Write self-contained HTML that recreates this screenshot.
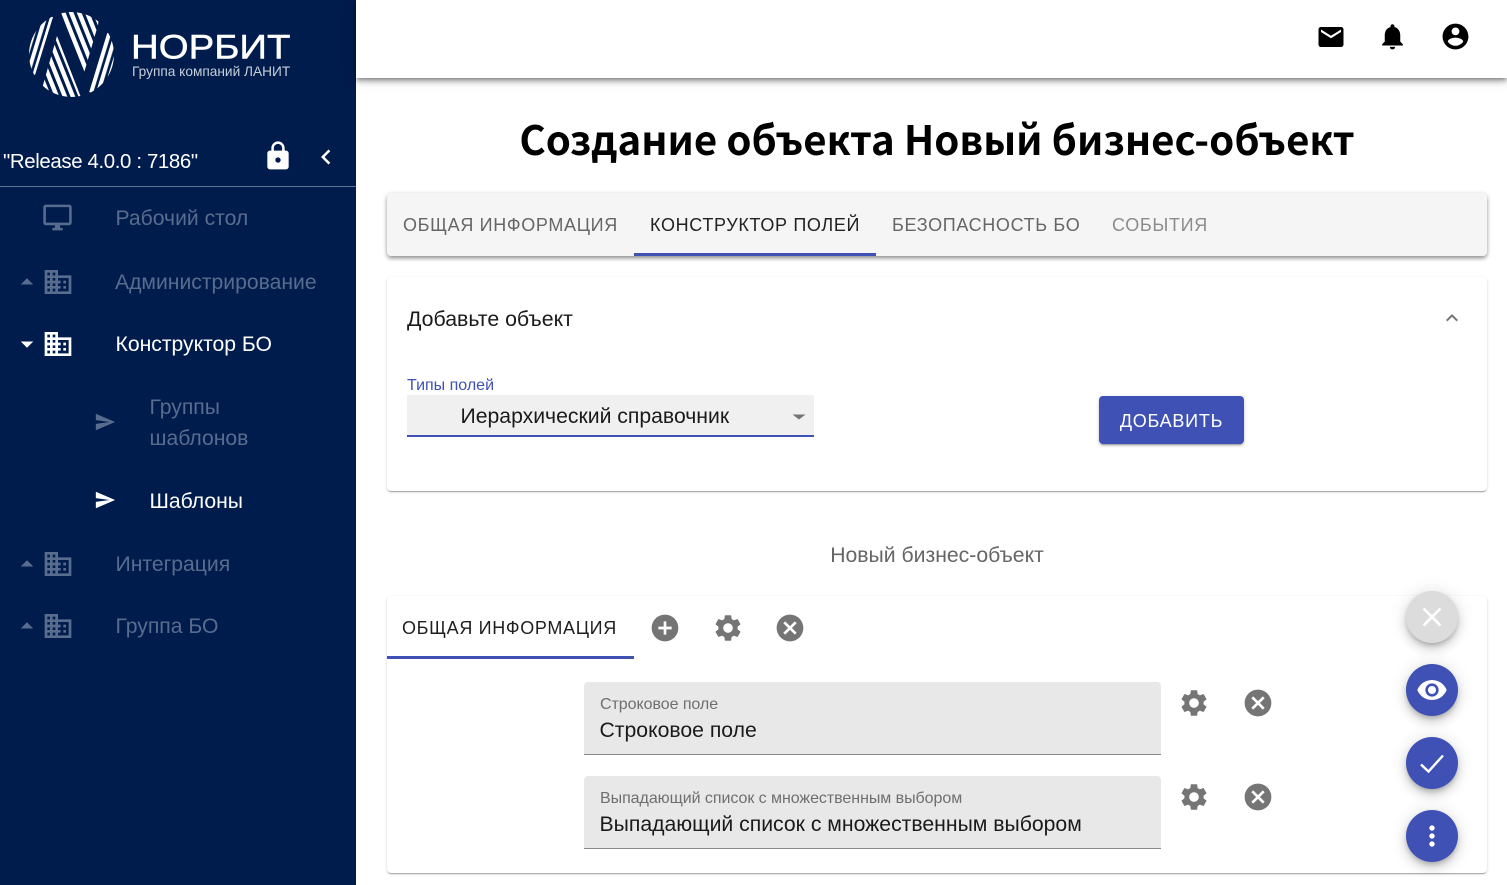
<!DOCTYPE html>
<html lang="ru"><head><meta charset="utf-8"><title>Создание объекта</title>
<style>
*{box-sizing:border-box}
html,body{margin:0;padding:0;width:1507px;height:885px;overflow:hidden;background:#fff;font-family:"Liberation Sans",sans-serif}
.a{position:absolute;white-space:nowrap}
svg.i{position:absolute;display:block}
#side{position:absolute;left:0;top:0;width:356px;height:885px;background:#001c4c}
.nav{position:absolute;font-size:21.15px;line-height:24px;color:#586c8e;white-space:nowrap;transform-origin:0 50%}
.nav.on{color:#fff}
.card{position:absolute;left:387px;width:1100px;background:#fff;border-radius:4px;box-shadow:0 2px 1px -1px rgba(0,0,0,.2),0 1px 1px 0 rgba(0,0,0,.14),0 1px 3px 0 rgba(0,0,0,.12)}
.tab{position:absolute;font-size:18px;line-height:24px;letter-spacing:.66px;white-space:nowrap}
.fab{position:absolute;left:1406px;width:52px;height:52px;border-radius:50%;background:#3f51b5;box-shadow:0 3px 5px -1px rgba(0,0,0,.2),0 6px 10px 0 rgba(0,0,0,.14),0 1px 18px 0 rgba(0,0,0,.12)}
.fld{position:absolute;left:584px;width:577px;height:73px;background:#e8e8e8;border-bottom:1px solid #8a8a8a;border-radius:4px 4px 0 0}
.fld .l{position:absolute;left:16px;top:13px;font-size:16px;line-height:19px;color:#6f6f6f;white-space:nowrap;letter-spacing:-.05px}
.fld .v{position:absolute;left:15.5px;top:37px;font-size:21.2px;line-height:24px;color:#1a1a1a;white-space:nowrap}
</style></head><body>
<svg width="0" height="0" style="position:absolute"><defs>
<path id="domain" d="M12 7V3H2v18h20V7H12zM6 19H4v-2h2v2zm0-4H4v-2h2v2zm0-4H4V9h2v2zm0-4H4V5h2v2zm4 12H8v-2h2v2zm0-4H8v-2h2v2zm0-4H8V9h2v2zm0-4H8V5h2v2zm10 12h-8v-2h2v-2h-2v-2h2v-2h-2V9h8v10zm-2-8h-2v2h2v-2zm0 4h-2v2h2v-2z"/>
<path id="send" d="M2.01 21L23 12 2.01 3 2 10l15 2-15 2z"/>
<path id="gear" d="M19.14 12.94c.04-.3.06-.61.06-.94 0-.32-.02-.64-.07-.94l2.03-1.58c.18-.14.23-.41.12-.61l-1.92-3.32c-.12-.22-.37-.29-.59-.22l-2.39.96c-.5-.38-1.03-.7-1.62-.94l-.36-2.54c-.04-.24-.24-.41-.48-.41h-3.84c-.24 0-.43.17-.47.41l-.36 2.54c-.59.24-1.13.57-1.62.94l-2.39-.96c-.22-.08-.47 0-.59.22L2.74 8.87c-.12.21-.08.47.12.61l2.03 1.58c-.05.3-.09.63-.09.94s.02.64.07.94l-2.03 1.58c-.18.14-.23.41-.12.61l1.92 3.32c.12.22.37.29.59.22l2.39-.96c.5.38 1.03.7 1.62.94l.36 2.54c.05.24.24.41.48.41h3.84c.24 0 .44-.17.47-.41l.36-2.54c.59-.24 1.13-.56 1.62-.94l2.39.96c.22.08.47 0 .59-.22l1.92-3.32c.12-.22.07-.47-.12-.61l-2.01-1.58zM12 15.6c-1.98 0-3.6-1.62-3.6-3.6s1.62-3.6 3.6-3.6 3.6 1.62 3.6 3.6-1.62 3.6-3.6 3.6z"/>
<path id="cancel" d="M12 2C6.47 2 2 6.47 2 12s4.47 10 10 10 10-4.47 10-10S17.53 2 12 2zm5 13.59L15.59 17 12 13.41 8.41 17 7 15.59 10.59 12 7 8.41 8.41 7 12 10.59 15.59 7 17 8.41 13.41 12 17 15.59z"/>
<pattern id="ps1" width="7.4" height="7.4" patternUnits="userSpaceOnUse" patternTransform="rotate(-21.8)"><rect width="4.4" height="7.4" fill="#fff"/></pattern>
<pattern id="ps2" width="6.6" height="6.6" patternUnits="userSpaceOnUse" patternTransform="rotate(17)"><rect width="4" height="6.6" fill="#fff"/></pattern>
<clipPath id="cc"><circle cx="71.5" cy="54.5" r="42.5"/></clipPath>
</defs></svg>

<div id="side">
<svg style="position:absolute;left:0;top:0" width="130" height="110">
<g clip-path="url(#cc)">
<polygon points="53,17 35,75 20,70 20,10" fill="url(#ps2)"/>
<polygon points="60,10 100,10 98,25 84,73" fill="url(#ps1)"/>
<polygon points="57,36 82,100 40,100 43,85" fill="url(#ps1)"/>
<polygon points="107,33 120,33 120,100 89,92" fill="url(#ps2)"/>
</g>
</svg>
<div class="a" style="left:131px;top:28px;font-size:35px;line-height:40px;color:#fff;-webkit-text-stroke:.5px #fff;transform-origin:0 0;transform:scale(1.097,.98)">НОРБИТ</div>
<div class="a" style="left:132px;top:64px;font-size:13.7px;line-height:16px;color:#c6ceda">Группа компаний ЛАНИТ</div>
<div class="a" style="left:3px;top:150px;font-size:20.4px;line-height:24px;color:#fff;letter-spacing:-.36px">"Release 4.0.0 : 7186"</div>
<svg class="i" style="left:262px;top:140px" width="32" height="32" viewBox="0 0 24 24" fill="#fff"><path d="M18 8h-1V6c0-2.76-2.24-5-5-5S7 3.24 7 6v2H6c-1.1 0-2 .9-2 2v10c0 1.1.9 2 2 2h12c1.1 0 2-.9 2-2V10c0-1.1-.9-2-2-2zm-6 9c-1.1 0-2-.9-2-2s.9-2 2-2 2 .9 2 2-.9 2-2 2zm3.1-9H8.9V6c0-1.71 1.39-3.1 3.1-3.1 1.71 0 3.1 1.39 3.1 3.1v2z"/></svg>
<svg class="i" style="left:311px;top:142px" width="30" height="30" viewBox="0 0 24 24" fill="#fff"><path d="M15.41 7.41L14 6l-6 6 6 6 1.41-1.41L10.83 12z"/></svg>
<div style="position:absolute;left:0;top:186px;width:356px;height:1px;background:#5f7394"></div>

<svg class="i" style="left:42px;top:202px" width="31" height="31" viewBox="0 0 24 24" fill="#586c8e"><path d="M21 2H3c-1.1 0-2 .9-2 2v12c0 1.1.9 2 2 2h7v2H8v2h8v-2h-2v-2h7c1.1 0 2-.9 2-2V4c0-1.1-.9-2-2-2zm0 14H3V4h18v12z"/></svg>
<div class="nav" style="left:115.5px;top:207px">Рабочий стол</div>

<svg class="i" style="left:12px;top:267px" width="30" height="30" viewBox="0 0 24 24" fill="#586c8e"><path d="M7 14l5-5 5 5z"/></svg>
<svg class="i" style="left:42px;top:266px" width="32" height="32" viewBox="0 0 24 24" fill="#586c8e"><use href="#domain"/></svg>
<div class="nav" style="left:115px;top:271px">Администрирование</div>

<svg class="i" style="left:12px;top:329px" width="30" height="30" viewBox="0 0 24 24" fill="#fff"><path d="M7 10l5 5 5-5z"/></svg>
<svg class="i" style="left:42px;top:328px" width="32" height="32" viewBox="0 0 24 24" fill="#fff"><use href="#domain"/></svg>
<div class="nav on" style="left:115.5px;top:333px">Конструктор БО</div>

<svg class="i" style="left:94px;top:411px" width="22" height="22" viewBox="0 0 24 24" fill="#586c8e"><use href="#send"/></svg>
<div class="nav" style="left:149.5px;top:396px">Группы</div>
<div class="nav" style="left:149.5px;top:427px">шаблонов</div>

<svg class="i" style="left:94px;top:489px" width="22" height="22" viewBox="0 0 24 24" fill="#fff"><use href="#send"/></svg>
<div class="nav on" style="left:149.5px;top:490px">Шаблоны</div>

<svg class="i" style="left:12px;top:549px" width="30" height="30" viewBox="0 0 24 24" fill="#586c8e"><path d="M7 14l5-5 5 5z"/></svg>
<svg class="i" style="left:42px;top:548px" width="32" height="32" viewBox="0 0 24 24" fill="#586c8e"><use href="#domain"/></svg>
<div class="nav" style="left:115.5px;top:553px">Интеграция</div>

<svg class="i" style="left:12px;top:611px" width="30" height="30" viewBox="0 0 24 24" fill="#586c8e"><path d="M7 14l5-5 5 5z"/></svg>
<svg class="i" style="left:42px;top:610px" width="32" height="32" viewBox="0 0 24 24" fill="#586c8e"><use href="#domain"/></svg>
<div class="nav" style="left:115.5px;top:615px">Группа БО</div>
</div>

<div style="position:absolute;left:356px;top:0;width:1151px;height:78px;background:#fff;box-shadow:0 2px 4px -1px rgba(0,0,0,.35),0 4px 5px 0 rgba(0,0,0,.2),0 1px 14px 0 rgba(0,0,0,.15)"></div>
<svg class="i" style="left:1316px;top:22px" width="30" height="30" viewBox="0 0 24 24"><path d="M20 4H4c-1.1 0-1.99.9-1.99 2L2 18c0 1.1.9 2 2 2h16c1.1 0 2-.9 2-2V6c0-1.1-.9-2-2-2zm0 4l-8 5-8-5V6l8 5 8-5v2z"/></svg>
<svg class="i" style="left:1377px;top:21px" width="31" height="31" viewBox="0 0 24 24"><path d="M12 22c1.1 0 2-.9 2-2h-4c0 1.1.89 2 2 2zm6-6v-5c0-3.07-1.64-5.64-4.5-6.32V4c0-.83-.67-1.5-1.5-1.5s-1.5.67-1.5 1.5v.68C7.63 5.36 6 7.92 6 11v5l-2 2v1h16v-1l-2-2z"/></svg>
<svg class="i" style="left:1440px;top:21px" width="31" height="31" viewBox="0 0 24 24"><path d="M12 2C6.48 2 2 6.48 2 12s4.48 10 10 10 10-4.48 10-10S17.52 2 12 2zm0 3c1.66 0 3 1.34 3 3s-1.34 3-3 3-3-1.34-3-3 1.34-3 3-3zm0 14.2c-2.5 0-4.71-1.28-6-3.22.03-1.99 4-3.08 6-3.08 1.99 0 5.97 1.09 6 3.08-1.29 1.94-3.5 3.22-6 3.22z"/></svg>

<div class="a" style="left:387px;width:1100px;top:112px;text-align:center;font-family:'Noto Sans CJK SC','Liberation Sans',sans-serif;font-weight:700;font-size:40.2px;line-height:52px;color:#000">Создание объекта Новый бизнес-объект</div>

<div class="card" style="top:193px;height:63px;background:#f5f5f5;box-shadow:0 3px 5px -1px rgba(0,0,0,.3),0 2px 4px 0 rgba(0,0,0,.14),0 1px 6px 0 rgba(0,0,0,.12)"></div>
<div class="tab" style="left:403px;top:213px;color:#666">ОБЩАЯ ИНФОРМАЦИЯ</div>
<div class="tab" style="left:650px;top:213px;color:#222">КОНСТРУКТОР ПОЛЕЙ</div>
<div class="tab" style="left:892px;top:213px;color:#666">БЕЗОПАСНОСТЬ БО</div>
<div class="tab" style="left:1112px;top:213px;color:#8c8c8c">СОБЫТИЯ</div>
<div style="position:absolute;left:634px;top:253px;width:242px;height:3px;background:#3f51b5"></div>

<div class="card" style="top:277px;height:214px"></div>
<div class="a" style="left:407px;top:307px;font-size:21.3px;line-height:24px;color:#1a1a1a">Добавьте объект</div>
<svg class="i" style="left:1440px;top:306px" width="24" height="24" viewBox="0 0 24 24" fill="#757575"><path d="M12 8l-6 6 1.41 1.41L12 10.83l4.59 4.58L18 14z"/></svg>
<div class="a" style="left:407px;top:376.5px;font-size:16px;line-height:18px;color:#3f51b5">Типы полей</div>
<div style="position:absolute;left:407px;top:395px;width:407px;height:42px;background:#f0f0f0;border-bottom:2px solid #3f51b5"></div>
<div class="a" style="left:460.5px;top:405px;font-size:21.2px;line-height:24px;color:#1a1a1a">Иерархический справочник</div>
<svg class="i" style="left:787px;top:405px" width="24" height="24" viewBox="0 0 24 24" fill="#757575"><path d="M5.5 9.5l6.5 5 6.5-5z"/></svg>
<div style="position:absolute;left:1099px;top:396px;width:145px;height:48px;background:#3f51b5;border-radius:4px;color:#fff;font-size:18px;line-height:50px;text-align:center;letter-spacing:.75px;box-shadow:0 3px 1px -2px rgba(0,0,0,.2),0 2px 2px 0 rgba(0,0,0,.14),0 1px 5px 0 rgba(0,0,0,.12)">ДОБАВИТЬ</div>

<div class="a" style="left:387px;width:1100px;top:544px;text-align:center;font-size:21.2px;line-height:24px;color:#666">Новый бизнес-объект</div>

<div class="card" style="top:596px;height:277px"></div>
<div class="tab" style="left:402px;top:616px;color:#1f1f1f">ОБЩАЯ ИНФОРМАЦИЯ</div>
<div style="position:absolute;left:387px;top:656px;width:247px;height:3px;background:#3f51b5"></div>
<svg class="i" style="left:649px;top:612px" width="32" height="32" viewBox="0 0 24 24" fill="#757575"><path d="M12 2C6.48 2 2 6.48 2 12s4.48 10 10 10 10-4.48 10-10S17.52 2 12 2zm5 11h-4v4h-2v-4H7v-2h4V7h2v4h4v2z"/></svg>
<svg class="i" style="left:712px;top:612px" width="32" height="32" viewBox="0 0 24 24" fill="#757575"><use href="#gear"/></svg>
<svg class="i" style="left:774px;top:612px" width="32" height="32" viewBox="0 0 24 24" fill="#757575"><use href="#cancel"/></svg>

<div class="fld" style="top:682px"><div class="l">Строковое поле</div><div class="v">Строковое поле</div></div>
<div class="fld" style="top:776px"><div class="l">Выпадающий список с множественным выбором</div><div class="v">Выпадающий список с множественным выбором</div></div>
<svg class="i" style="left:1178px;top:687px" width="32" height="32" viewBox="0 0 24 24" fill="#757575"><use href="#gear"/></svg>
<svg class="i" style="left:1242px;top:687px" width="32" height="32" viewBox="0 0 24 24" fill="#757575"><use href="#cancel"/></svg>
<svg class="i" style="left:1178px;top:781px" width="32" height="32" viewBox="0 0 24 24" fill="#757575"><use href="#gear"/></svg>
<svg class="i" style="left:1242px;top:781px" width="32" height="32" viewBox="0 0 24 24" fill="#757575"><use href="#cancel"/></svg>

<div class="fab" style="top:591px;background:#dcdcdc"><svg class="i" style="left:10px;top:10px" width="32" height="32" viewBox="0 0 24 24" fill="#fff"><path d="M19 6.41L17.59 5 12 10.59 6.41 5 5 6.41 10.59 12 5 17.59 6.41 19 12 13.41 17.59 19 19 17.59 13.41 12z"/></svg></div>
<div class="fab" style="top:664px"><svg class="i" style="left:10px;top:10px" width="32" height="32" viewBox="0 0 24 24" fill="#fff"><path d="M12 4.5C7 4.5 2.73 7.61 1 12c1.73 4.39 6 7.5 11 7.5s9.27-3.11 11-7.5c-1.73-4.39-6-7.5-11-7.5zM12 17c-2.76 0-5-2.24-5-5s2.24-5 5-5 5 2.24 5 5-2.24 5-5 5zm0-8c-1.66 0-3 1.34-3 3s1.34 3 3 3 3-1.34 3-3-1.34-3-3-3z"/></svg></div>
<div class="fab" style="top:737px"><svg class="i" style="left:0;top:0" width="52" height="52" viewBox="0 0 52 52" fill="none" stroke="#fff" stroke-width="2.4"><path d="M15 27.5l7.5 7L37 18.5"/></svg></div>
<div class="fab" style="top:810px"><svg class="i" style="left:10px;top:10px" width="32" height="32" viewBox="0 0 24 24" fill="#fff"><path d="M12 8c1.1 0 2-.9 2-2s-.9-2-2-2-2 .9-2 2 .9 2 2 2zm0 2c-1.1 0-2 .9-2 2s.9 2 2 2 2-.9 2-2-.9-2-2-2zm0 6c-1.1 0-2 .9-2 2s.9 2 2 2 2-.9 2-2-.9-2-2-2z"/></svg></div>
</body></html>
